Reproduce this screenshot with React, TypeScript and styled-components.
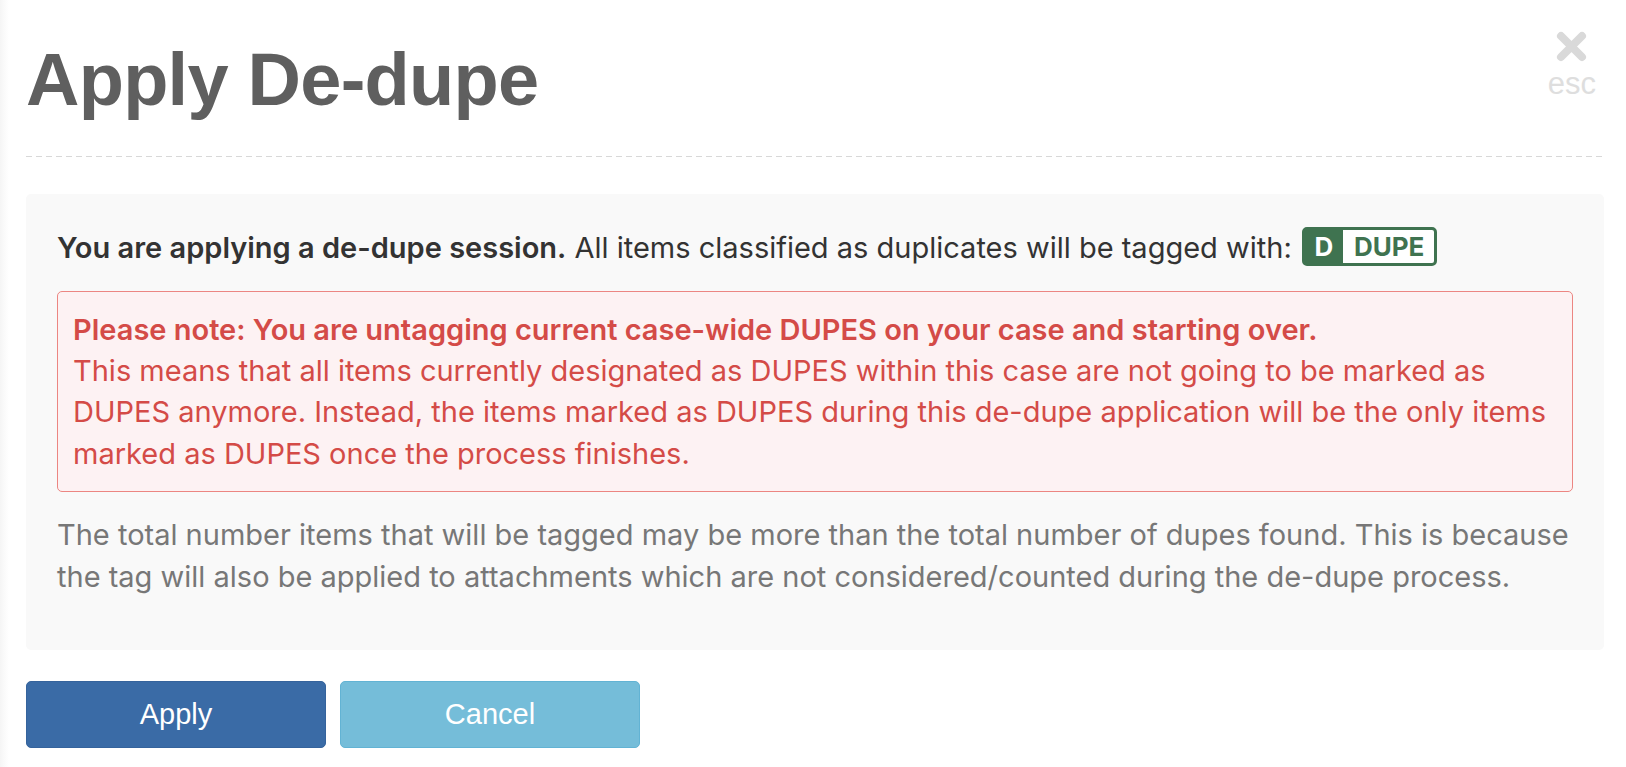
import React from "react";
import styled, { createGlobalStyle } from "styled-components";

const Global = createGlobalStyle`
  html, body { margin: 0; padding: 0; background: #ffffff; }
  body { font-family: Inter, "Noto Sans", sans-serif; }
  * { box-sizing: border-box; }
`;

const Page = styled.div`
  min-height: 767px;
  background: linear-gradient(to right, #f5f5f5 0px, #fbfbfb 5px, #ffffff 9px);
`;

const Modal = styled.div`
  padding: 0 22px 0 26px;
  display: flex;
  flex-direction: column;
`;

const Header = styled.div`
  display: flex;
  justify-content: space-between;
  align-items: flex-start;
  padding-top: 31px;
`;

const Title = styled.h1`
  margin: 12px 0 0 0;
  font-family: "Liberation Sans", Arial, sans-serif;
  font-weight: 700;
  font-size: 74px;
  line-height: 74px;
  letter-spacing: -0.75px;
  color: #5f5f5f;
`;

const Close = styled.button`
  display: flex;
  flex-direction: column;
  align-items: center;
  margin-right: 8px;
  padding: 0;
  border: 0;
  background: none;
  cursor: pointer;
`;

const Esc = styled.span`
  margin-top: 6px;
  font-family: "Liberation Sans", Arial, sans-serif;
  font-size: 31px;
  line-height: 31px;
  color: #dedede;
`;

const Divider = styled.div`
  height: 1px;
  margin-top: 39px;
  background: repeating-linear-gradient(to right, #d8d8d8 0 6px, transparent 6px 10px);
`;

const Panel = styled.div`
  margin-top: 37px;
  background: #f9f9f9;
  border-radius: 5px;
  padding: 33px 31px 53px 31px;
  font-size: 29px;
  line-height: 41.4px;
`;

const Lead = styled.p`
  margin: 0;
  color: #333333;
`;

const Strong = styled.strong`
  font-weight: 600;
`;

const Tag = styled.span`
  display: inline-flex;
  align-items: stretch;
  vertical-align: middle;
  position: relative;
  top: -4px;
  height: 39px;
  margin-left: 2px;
  border: 3px solid #3f7350;
  border-radius: 5px;
  background: #3f7350;
  font-weight: 700;
  font-size: 26px;
  line-height: 33px;
  overflow: hidden;
`;

const TagKey = styled.span`
  width: 38px;
  text-align: center;
  color: #ffffff;
`;

const TagName = styled.span`
  background: #ffffff;
  color: #3f7350;
  padding: 0 10px 0 11px;
`;

const Alert = styled.div`
  margin-top: 21px;
  border: 1px solid #ec8682;
  border-radius: 5px;
  background: #fdf2f3;
  padding: 17px 15px;
  color: #d44b47;
`;

const AlertTitle = styled.div`
  font-weight: 600;
`;

const Note = styled.p`
  margin: 22px 0 0 0;
  color: #777777;
`;

const Actions = styled.div`
  display: flex;
  gap: 14px;
  margin-top: 31px;
`;

const Button = styled.button<{ $variant: "primary" | "info" }>`
  width: 300px;
  height: 67px;
  border-radius: 5px;
  border: 1px solid ${(p) => (p.$variant === "primary" ? "#35639c" : "#62b3d4")};
  background: ${(p) => (p.$variant === "primary" ? "#3a6ba6" : "#75bdd9")};
  color: #ffffff;
  font-family: "Liberation Sans", Arial, sans-serif;
  font-size: 29px;
  cursor: pointer;
`;

export default function App() {
  return (
    <>
      <Global />
      <Page>
        <Modal>
          <Header>
            <Title>Apply De-dupe</Title>
            <Close aria-label="Close">
              <svg width="31" height="31" viewBox="0 0 31 31">
                <path
                  d="M5 5 L26 26 M26 5 L5 26"
                  stroke="#d9d9d9"
                  strokeWidth="8"
                  strokeLinecap="round"
                />
              </svg>
              <Esc>esc</Esc>
            </Close>
          </Header>
          <Divider />
          <Panel>
            <Lead>
              <Strong>You are applying a de-dupe session.</Strong> All items classified as duplicates will be tagged with:{" "}
              <Tag>
                <TagKey>D</TagKey>
                <TagName>DUPE</TagName>
              </Tag>
            </Lead>
            <Alert>
              <AlertTitle>Please note: You are untagging current case-wide DUPES on your case and starting over.</AlertTitle>
              This means that all items currently designated as DUPES within this case are not going to be marked as DUPES anymore. Instead, the items marked as DUPES during this de-dupe application will be the only items marked as DUPES once the process finishes.
            </Alert>
            <Note>
              The total number items that will be tagged may be more than the total number of dupes found. This is because the tag will also be applied to attachments which are not considered/counted during the de-dupe process.
            </Note>
          </Panel>
          <Actions>
            <Button $variant="primary">Apply</Button>
            <Button $variant="info">Cancel</Button>
          </Actions>
        </Modal>
      </Page>
    </>
  );
}
